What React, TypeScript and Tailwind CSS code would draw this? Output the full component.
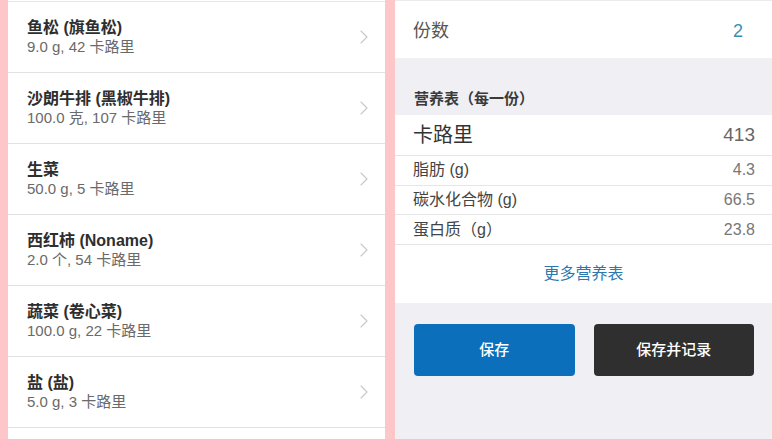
import { ChevronRight } from "lucide-react";

const foods = [
  { name: "鱼松 (旗鱼松)", detail: "9.0 g, 42 卡路里" },
  { name: "沙朗牛排 (黑椒牛排)", detail: "100.0 克, 107 卡路里" },
  { name: "生菜", detail: "50.0 g, 5 卡路里" },
  { name: "西红柿 (Noname)", detail: "2.0 个, 54 卡路里" },
  { name: "蔬菜 (卷心菜)", detail: "100.0 g, 22 卡路里" },
  { name: "盐 (盐)", detail: "5.0 g, 3 卡路里" },
];

const nutrients = [
  { label: "脂肪 (g)", value: "4.3" },
  { label: "碳水化合物 (g)", value: "66.5" },
  { label: "蛋白质（g）", value: "23.8" },
];

const font = { fontFamily: '"Liberation Sans", "Noto Sans CJK SC", sans-serif' };

export default function App() {
  return (
    <div className="w-[780px] h-[439px] overflow-hidden flex bg-[#fdc6c9]" style={font}>
      {/* left: food list */}
      <div className="ml-[8px] w-[377px] h-full bg-white flex flex-col">
        <div className="h-[2px] border-b border-[#e6e6e6]" />
        {foods.map((f) => (
          <div
            key={f.name}
            className="h-[71px] shrink-0 flex items-center justify-between pl-[19px] pr-[9px] border-b border-[#e2e2e2]"
          >
            <div className="flex flex-col leading-none">
              <span className="text-[16px] font-semibold text-[#2e2e2e]">{f.name}</span>
              <span className="mt-[3px] text-[15px] text-[#6a6a6a]">{f.detail}</span>
            </div>
            <ChevronRight className="w-[24px] h-[24px] text-[#c7c7cc]" strokeWidth={1.1} />
          </div>
        ))}
      </div>

      {/* right: servings & nutrition */}
      <div className="ml-[10px] w-[377px] h-full bg-[#efeff4] flex flex-col">
        <div className="h-[58px] bg-white border-t border-[#ececec] flex items-center justify-between pt-[3px] pl-[18px] pr-[29px]">
          <span className="text-[18px] text-[#555]">份数</span>
          <span className="text-[18px] text-[#3d8db3]">2</span>
        </div>
        <div className="h-[57px] flex items-end pl-[19px] pb-[5px]">
          <span className="text-[15px] font-semibold text-[#3a3a3a]">营养表（每一份）</span>
        </div>
        <div className="bg-white flex flex-col">
          <div className="h-[41px] flex items-center justify-between pl-[18px] pr-[17px] border-b border-[#e6e6e6]">
            <span className="text-[20px] text-[#333]">卡路里</span>
            <span className="text-[19px] text-[#666]">413</span>
          </div>
          {nutrients.map((n) => (
            <div
              key={n.label}
              className="h-[29.7px] flex items-center justify-between pl-[18px] pr-[17px] border-b border-[#e6e6e6]"
            >
              <span className="text-[16px] text-[#444]">{n.label}</span>
              <span className="text-[16px] text-[#777]">{n.value}</span>
            </div>
          ))}
          <div className="h-[58px] flex items-center justify-center">
            <span className="text-[16px] text-[#2a79ae]">更多营养表</span>
          </div>
        </div>
        <div className="flex gap-[19px] pl-[19px] pr-[18px] pt-[21px]">
          <button className="flex-1 h-[52px] rounded-[4px] bg-[#0c6fbb] text-white text-[15px] font-medium">
            保存
          </button>
          <button className="flex-1 h-[52px] rounded-[4px] bg-[#2f2f2f] text-white text-[15px] font-medium">
            保存并记录
          </button>
        </div>
      </div>
    </div>
  );
}
